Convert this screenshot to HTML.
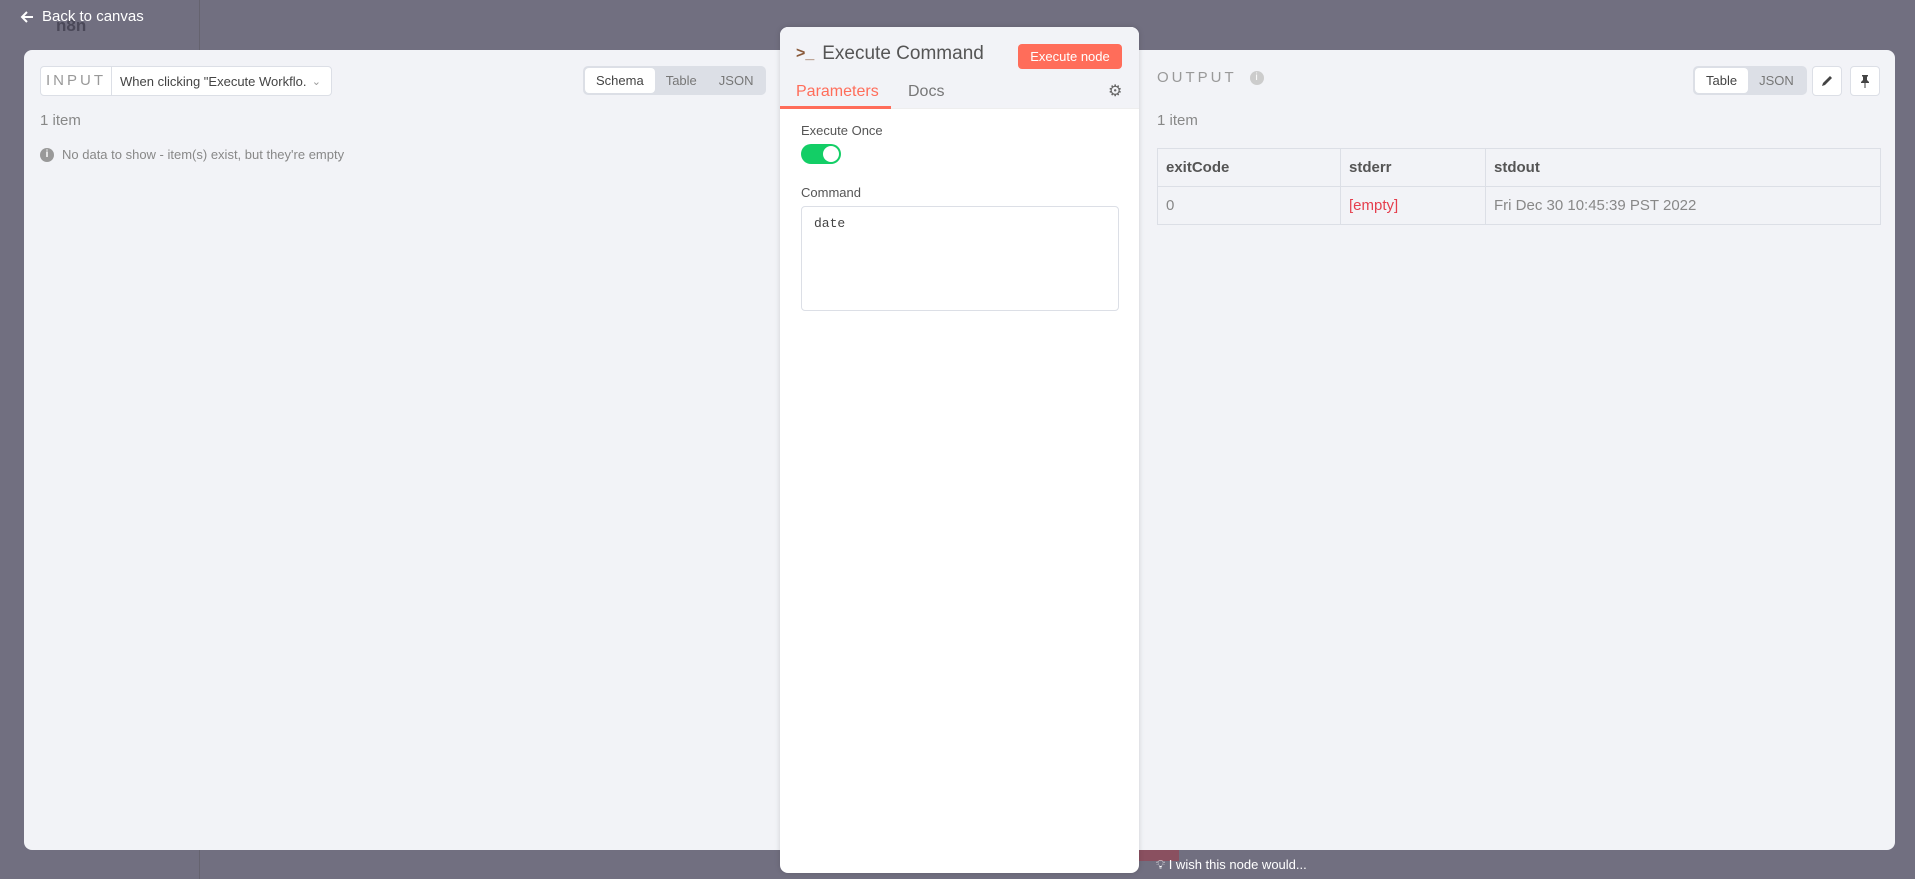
<!DOCTYPE html>
<html><head><style>
*{box-sizing:border-box;margin:0;padding:0}
body{width:1915px;height:879px;background:#716f80;font-family:"Liberation Sans",sans-serif;position:relative;overflow:hidden;color:#555}
.a{position:absolute}
.modal{left:24px;top:50px;width:1871px;height:800px;background:#f2f3f7;border-radius:8px}
.seg{background:#dcdfe6;border-radius:5px;display:flex;padding:2px;height:29px}
.seg div{padding:0 11px;line-height:25px;font-size:13px;color:#777;border-radius:4px}
.seg .on{background:#fff;color:#444}
.btn{background:#fff;border:1px solid #dcdfe6;border-radius:4px;width:30px;height:30px;display:flex;align-items:center;justify-content:center}
table{border-collapse:collapse;font-size:15px}
td{border:1px solid #dcdfe6;padding:0 8px;height:38px}
</style></head><body>
<div class="a" style="left:56px;top:16px;color:#4a4858;font-size:17px;font-weight:bold">n8n</div>
<div class="a" style="left:20px;top:8px;color:#fff;font-size:15px;display:flex;align-items:center;gap:8px">
<svg width="14" height="14" viewBox="0 0 14 14"><path d="M13 7H2M7 2L2 7l5 5" stroke="#fff" stroke-width="2" fill="none"/></svg>Back to canvas</div>
<div class="a" style="left:199px;top:0;width:1px;height:879px;background:#65636f"></div>
<div class="a" style="left:1139px;top:850px;width:40px;height:11px;background:#8a5060"></div>
<div class="a" style="left:1156px;top:857px;color:#fff;font-size:13px">💡︎ I wish this node would...</div>

<div class="a modal"></div>
<!-- left -->
<div class="a" style="left:40px;top:66px;width:292px;height:30px;background:#fff;border:1px solid #dcdfe6;border-radius:4px;display:flex;align-items:center">
<div style="width:71px;border-right:1px solid #dcdfe6;height:100%;line-height:28px;text-align:center;letter-spacing:3px;color:#999;font-size:15px">INPUT</div>
<div style="padding-left:8px;font-size:13px;color:#444;flex:1">When clicking "Execute Workflo.</div>
<div style="padding-right:10px;color:#999;font-size:11px">&#8964;</div></div>
<div class="a seg" style="left:583px;top:66px"><div class="on">Schema</div><div>Table</div><div>JSON</div></div>
<div class="a" style="left:40px;top:112px;font-size:15px;color:#888">1 item</div>
<div class="a" style="left:40px;top:147px;font-size:13px;color:#888;display:flex;align-items:center;gap:8px"><span style="width:14px;height:14px;border-radius:50%;background:#999;color:#fff;font-size:10px;text-align:center;line-height:14px;font-weight:bold">i</span>No data to show - item(s) exist, but they're empty</div>
<!-- right -->
<div class="a" style="left:1157px;top:69px;font-size:15px;letter-spacing:3px;color:#999">OUTPUT <span style="display:inline-block;width:14px;height:14px;border-radius:50%;background:#ccc;color:#fff;font-size:10px;text-align:center;line-height:14px;letter-spacing:0;vertical-align:middle;margin-left:6px">i</span></div>
<div class="a seg" style="left:1693px;top:66px"><div class="on">Table</div><div>JSON</div></div>
<div class="a btn" style="left:1812px;top:66px"><svg width="14" height="14" viewBox="0 0 14 14"><path d="M2 12l1-3 7-7 2 2-7 7z" fill="#444"/></svg></div>
<div class="a btn" style="left:1850px;top:66px"><svg width="14" height="14" viewBox="0 0 14 14"><path d="M4 1h6v1l-1 1v3l2 2v1H3V8l2-2V3L4 2z M6.5 9h1v5h-1z" fill="#444"/></svg></div>
<div class="a" style="left:1157px;top:112px;font-size:15px;color:#888">1 item</div>
<table class="a" style="left:1157px;top:148px;width:724px">
<tr><td style="width:183px;font-weight:bold;color:#555">exitCode</td><td style="width:145px;font-weight:bold;color:#555">stderr</td><td style="font-weight:bold;color:#555">stdout</td></tr>
<tr><td style="color:#888">0</td><td style="color:#e53e4d">[empty]</td><td style="color:#888">Fri Dec 30 10:45:39 PST 2022</td></tr></table>
<!-- center -->
<div class="a" style="left:780px;top:27px;width:359px;height:846px;background:#fff;border-radius:8px;overflow:hidden;box-shadow:0 0 6px rgba(0,0,0,.15)">
<div style="background:#f2f3f7;height:82px;position:relative;border-bottom:1px solid #eee">
<div class="a" style="left:16px;top:16px;display:flex;align-items:center;gap:8px;font-size:19px;color:#555"><span style="color:#8a5a3a;font-weight:bold;font-size:16px">&gt;_</span>Execute Command</div>
<div class="a" style="left:238px;top:17px;width:104px;height:25px;background:#ff6d5a;border-radius:4px;color:#fff;font-size:13px;text-align:center;line-height:25px">Execute node</div>
<div class="a" style="left:16px;top:56px;font-size:16px;color:#ff6d5a">Parameters</div>
<div class="a" style="left:0;top:79px;width:111px;height:3px;background:#ff6d5a"></div>
<div class="a" style="left:128px;top:56px;font-size:16px;color:#777">Docs</div>
<div class="a" style="left:328px;top:54px;font-size:16px;color:#666">⚙</div>
</div>
<div class="a" style="left:21px;top:96px;font-size:13px;color:#555">Execute Once</div>
<div class="a" style="left:21px;top:117px;width:40px;height:20px;border-radius:10px;background:#13ce66"><div style="position:absolute;right:2px;top:2px;width:16px;height:16px;border-radius:50%;background:#fff"></div></div>
<div class="a" style="left:21px;top:158px;font-size:13px;color:#555">Command</div>
<div class="a" style="left:21px;top:179px;width:318px;height:105px;border:1px solid #dcdfe6;border-radius:4px;padding:9px 12px;font-family:'Liberation Mono',monospace;font-size:13px;color:#444">date</div>
</div>
</body></html>
